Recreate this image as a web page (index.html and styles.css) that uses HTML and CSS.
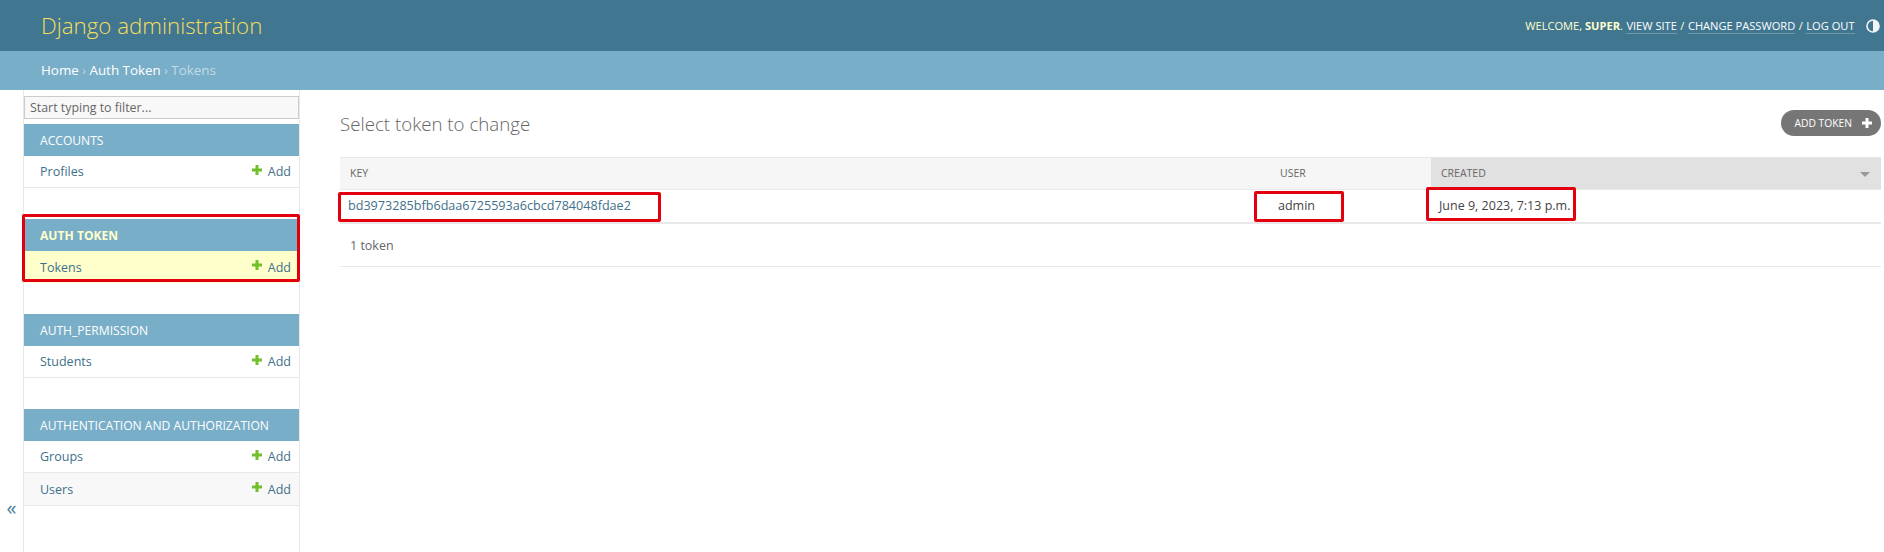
FILE: index.html
```html
<!DOCTYPE html>
<html lang="en">
<head>
    <meta charset="UTF-8">
    <title>Select token to change | Django site admin</title>
    <link rel="stylesheet" href="styles.css">
</head>
<body>
    <div class="header">
        <div class="branding">Django administration</div>
        <div class="user-tools">
            <span>Welcome, <strong>super</strong>.</span>
            <a href="#">View site</a> /
            <a href="#">Change password</a> /
            <a href="#">Log out</a>
            <svg class="theme-icon" width="14" height="14" viewBox="0 0 14 14">
                <circle cx="7" cy="7" r="6" fill="none" stroke="#f5f5f5" stroke-width="1.6"/>
                <path d="M7 1a6 6 0 0 1 0 12z" fill="#f5f5f5"/>
            </svg>
        </div>
    </div>
    <div class="breadcrumbs">
        <a href="#">Home</a> <span class="sep">›</span> <a href="#">Auth Token</a> <span class="sep">›</span> Tokens
    </div>
    <div class="main">
        <div class="toggle-col"><span class="toggle">«</span></div>
        <div class="sidebar">
            <input class="filter" type="text" placeholder="Start typing to filter...">
            <div class="module">
                <div class="caption">Accounts</div>
                <div class="row"><a href="#">Profiles</a><a class="add" href="#"><svg class="plus" viewBox="0 0 12 12"><path d="M4.500 1h3v3.500H11v3H7.500V11h-3V7.500H1v-3h3.500z"/></svg>Add</a></div>
            </div>
            <div class="module current">
                <div class="caption">Auth Token</div>
                <div class="row"><a href="#">Tokens</a><a class="add" href="#"><svg class="plus" viewBox="0 0 12 12"><path d="M4.500 1h3v3.500H11v3H7.500V11h-3V7.500H1v-3h3.500z"/></svg>Add</a></div>
                <div class="mark mark-module"></div>
            </div>
            <div class="module">
                <div class="caption">Auth_Permission</div>
                <div class="row"><a href="#">Students</a><a class="add" href="#"><svg class="plus" viewBox="0 0 12 12"><path d="M4.500 1h3v3.500H11v3H7.500V11h-3V7.500H1v-3h3.500z"/></svg>Add</a></div>
            </div>
            <div class="module">
                <div class="caption">Authentication and Authorization</div>
                <div class="row"><a href="#">Groups</a><a class="add" href="#"><svg class="plus" viewBox="0 0 12 12"><path d="M4.500 1h3v3.500H11v3H7.500V11h-3V7.500H1v-3h3.500z"/></svg>Add</a></div>
                <div class="row alt"><a href="#">Users</a><a class="add" href="#"><svg class="plus" viewBox="0 0 12 12"><path d="M4.500 1h3v3.500H11v3H7.500V11h-3V7.500H1v-3h3.500z"/></svg>Add</a></div>
            </div>
        </div>
        <div class="content">
            <div class="title-row">
                <h1>Select token to change</h1>
                <a class="addlink" href="#">Add token<svg class="plus-white" viewBox="0 0 12 12"><path d="M4.500 1h3v3.500H11v3H7.500V11h-3V7.500H1v-3h3.500z"/></svg></a>
            </div>
            <div class="results">
                <div class="thead">
                    <div class="col-key">Key</div>
                    <div class="col-user">User</div>
                    <div class="col-created sorted">Created<span class="sort-arrow"></span></div>
                </div>
                <div class="tbody">
                    <div class="col-key"><a href="#">bd3973285bfb6daa6725593a6cbcd784048fdae2</a></div>
                    <div class="col-user">admin</div>
                    <div class="col-created">June 9, 2023, 7:13 p.m.</div>
                    <div class="mark mark-key"></div>
                    <div class="mark mark-user"></div>
                    <div class="mark mark-created"></div>
                </div>
            </div>
            <div class="paginator">1 token</div>
        </div>
    </div>
</body>
</html>
```

FILE: styles.css
```css
body {
    margin: 0;
    height: 552px;
    overflow: hidden;
    font-family: "Open Sans", "Noto Sans", sans-serif;
    font-size: 13px;
    color: #444;
    background-color: #fff;
}

a {
    color: #41708a;
    text-decoration: none;
}

/* top bars */
.header {
    height: 51px;
    padding: 0 4px 0 41px;
    display: flex;
    justify-content: space-between;
    align-items: center;
    background-color: #417690;
}

.branding {
    font-size: 22.300px;
    font-weight: 300;
    color: #f5dd5d;
}

.user-tools {
    display: flex;
    align-items: center;
    gap: 3.500px;
    font-size: 11.100px;
    text-transform: uppercase;
    color: #ffc;
}

.user-tools a {
    color: #fff;
    border-bottom: 1px solid rgba(255, 255, 255, 0.25);
}

.theme-icon {
    margin-left: 8px;
}

.breadcrumbs {
    height: 39px;
    line-height: 39px;
    padding-left: 41px;
    font-size: 13.400px;
    color: rgba(255, 255, 255, 0.55);
    background-color: #79aec8;
}

.breadcrumbs a {
    color: #fff;
}

.breadcrumbs .sep {
    font-size: 12px;
}

/* sidebar */
.main {
    display: flex;
    height: 462px;
}

.toggle-col {
    width: 24px;
    display: flex;
    justify-content: center;
    padding-top: 408px;
    box-sizing: border-box;
    border-right: 1px solid #e8e8e8;
    flex-shrink: 0;
}

.toggle {
    font-size: 20px;
    line-height: 20px;
    color: #447e9b;
}

.sidebar {
    width: 276px;
    box-sizing: border-box;
    border-right: 1px solid #e8e8e8;
    padding-top: 6px;
    flex-shrink: 0;
}

.filter {
    display: block;
    width: 275px;
    height: 23px;
    box-sizing: border-box;
    margin: 0 0 5px;
    padding: 0 5px;
    font-family: inherit;
    font-size: 12.400px;
    color: #333;
    background-color: #f8f8f8;
    border: 1px solid #ccc;
}

.filter::placeholder {
    color: #666;
}

.module {
    position: relative;
    margin-bottom: 31px;
}

.caption {
    height: 32px;
    line-height: 33px;
    padding-left: 16px;
    font-size: 12.100px;
    text-transform: uppercase;
    color: #fff;
    background-color: #79aec8;
}

.current .caption {
    font-weight: 700;
    color: #ffc;
}

.row {
    height: 32px;
    box-sizing: border-box;
    padding: 0 8px 0 16px;
    display: flex;
    justify-content: space-between;
    align-items: center;
    font-size: 12.500px;
    border-bottom: 1px solid #e8e8e8;
}

.row > a:first-child {
    font-weight: 500;
}

.row.alt {
    height: 33px;
    background-color: #f8f8f8;
}

.current .row {
    background-color: #ffc;
    border-bottom: none;
}

.add {
    display: flex;
    align-items: center;
    gap: 5px;
}

.plus {
    width: 12px;
    height: 12px;
    margin-top: -4px;
    fill: #70bf2b;
}

/* main content */
.content {
    flex: 1;
    padding: 0 3px 0 40px;
    min-width: 0;
}

.title-row {
    height: 67px;
    display: flex;
    justify-content: space-between;
    align-items: flex-start;
}

h1 {
    margin: 21px 0 0;
    font-size: 18.700px;
    font-weight: 300;
    color: #666;
}

.addlink {
    margin-top: 20px;
    height: 26px;
    padding: 0 8px 0 13px;
    display: flex;
    align-items: center;
    gap: 9px;
    font-size: 10.300px;
    text-transform: uppercase;
    color: #fff;
    background-color: #767676;
    border-radius: 13px;
}

.plus-white {
    width: 12px;
    height: 12px;
    fill: #fff;
}

.results {
    position: relative;
}

.thead,
.tbody {
    display: grid;
    grid-template-columns: 930px 161px 1fr;
    position: relative;
}

.thead {
    height: 33px;
    box-sizing: border-box;
    font-size: 10.500px;
    font-weight: 500;
    text-transform: uppercase;
    line-height: 31px;
    color: #666;
    background-color: #f6f6f6;
    border-top: 1px solid #e8e8e8;
    border-bottom: 1px solid #e8e8e8;
}

.thead .col-key,
.thead .col-user,
.thead .col-created {
    padding-left: 10px;
}

.sorted {
    position: relative;
    background-color: #e1e1e1;
}

.sort-arrow {
    position: absolute;
    right: 11px;
    top: 14px;
    border: 5px solid transparent;
    border-top-color: #999;
    border-bottom: none;
}

.tbody {
    height: 34px;
    box-sizing: border-box;
    line-height: 32px;
    font-size: 12.500px;
    border-bottom: 2px solid #e8e8e8;
}

.tbody .col-key {
    padding-left: 8px;
    font-size: 12.600px;
}

.tbody .col-user {
    padding-left: 8px;
}

.tbody .col-created {
    padding-left: 8px;
}

.paginator {
    height: 43px;
    line-height: 43px;
    box-sizing: border-box;
    padding-left: 10px;
    font-size: 12.500px;
    color: #666;
    border-bottom: 1px solid #e8e8e8;
}

/* red boxes drawn over the screenshot */
.mark {
    position: absolute;
    box-sizing: border-box;
    border: 3px solid #e2000f;
    border-radius: 2px;
    pointer-events: none;
}

.mark-module {
    left: -2px;
    right: -1px;
    top: -5px;
    bottom: 1px;
}

.mark-key {
    left: -2px;
    top: 2px;
    width: 323px;
    height: 30px;
}

.mark-user {
    left: 914px;
    top: 1px;
    width: 90px;
    height: 31px;
}

.mark-created {
    left: 1086px;
    top: -3px;
    width: 150px;
    height: 34px;
}
```
